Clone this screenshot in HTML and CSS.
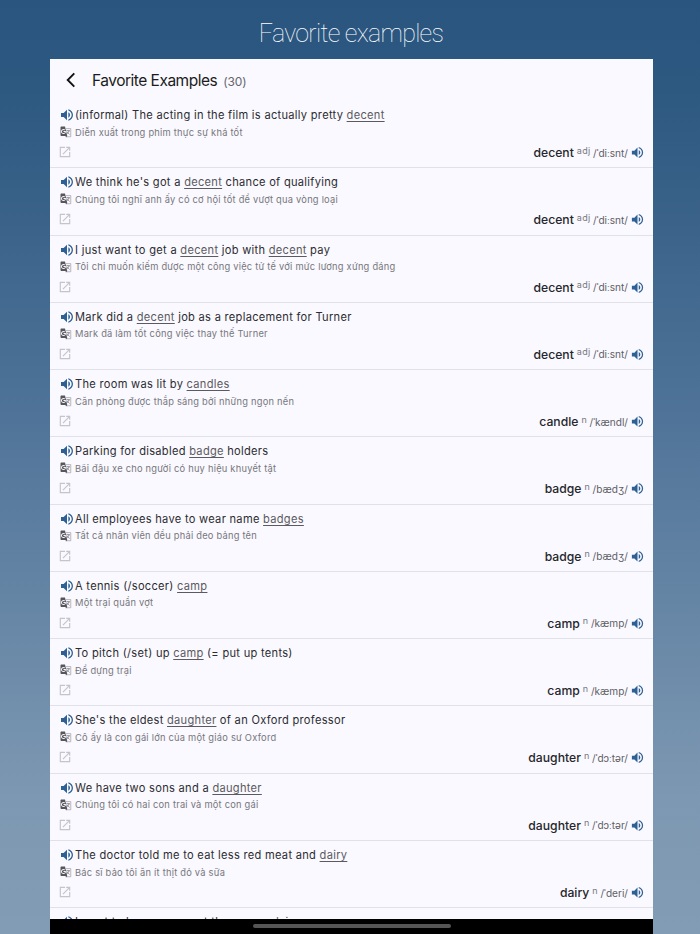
FILE: index.html
```html
<!DOCTYPE html>
<html lang="en">
<head>
    <meta charset="UTF-8">
    <meta name="viewport" content="width=device-width, initial-scale=1.0">
    <title>Favorite examples</title>
    <link rel="stylesheet" href="styles.css">
</head>
<body>
    <svg class="defs" width="0" height="0">
        <symbol id="sound" viewBox="0 0 24 24">
            <path d="M3 9v6h4l5 5V4L7 9H3zm13.5 3c0-1.77-1.02-3.29-2.5-4.03v8.05c1.48-.73 2.5-2.25 2.5-4.02zM14 3.23v2.06c2.89.86 5 3.54 5 6.71s-2.11 5.85-5 6.71v2.06c4.01-.91 7-4.49 7-8.77s-2.99-7.86-7-8.77z"/>
        </symbol>
        <symbol id="translate" viewBox="0 0 24 24">
            <path class="sheet" d="M12 5.2h9.5v16.3h-8.5"/>
            <path class="mark" d="M12.5 9.5h7.5M16 8v1.5M18.3 9.5c-.7 2.6-2.3 4.5-4.3 6M14.5 12l4.500 5"/>
            <path fill-rule="evenodd" d="M10 1H3c-1.1 0-2 .9-2 2v15c0 1.1.9 2 2 2h8l1 3 2.5-3.2L10 1zM7 16c-2.76 0-5-2.24-5-5s2.24-5 5-5c1.35 0 2.48.5 3.35 1.3L9.03 8.57c-.38-.36-1.04-.78-2.03-.78-1.74 0-3.15 1.44-3.15 3.21S5.26 14.21 7 14.21c2.01 0 2.84-1.44 2.92-2.41H7v-1.71h4.68c.07.31.12.61.12 1.02C11.8 13.97 9.89 16 7 16z"/>
        </symbol>
        <symbol id="open" viewBox="0 0 24 24">
            <path d="M19 19H5V5h7V3H3v18h18v-9h-2v7zM14 3v2h3.59l-9.83 9.83 1.41 1.41L19 6.41V10h2V3h-7z"/>
        </symbol>
    </svg>

    <h1 class="caption">Favorite examples</h1>
    <div class="screen">
        <div class="header">
            <svg class="back" viewBox="0 0 10 16"><path d="M8.3 1.3L1.7 8l6.6 6.7"/></svg>
            <span class="title">Favorite Examples</span>
            <span class="count">(30)</span>
        </div>
        <ul class="list">
            <li>
                <p class="en"><svg><use href="#sound"/></svg><span>(informal) The acting in the film is actually pretty <u>decent</u></span></p>
                <p class="vi"><svg><use href="#translate"/></svg><span>Diễn xuất trong phim thực sự khá tốt</span></p>
                <div class="foot"><svg class="open"><use href="#open"/></svg><b>decent</b><sup>adj</sup><span class="ipa">/ˈdiːsnt/</span><svg class="sound"><use href="#sound"/></svg></div>
            </li>
            <li>
                <p class="en"><svg><use href="#sound"/></svg><span>We think he's got a <u>decent</u> chance of qualifying</span></p>
                <p class="vi"><svg><use href="#translate"/></svg><span>Chúng tôi nghĩ anh ấy có cơ hội tốt để vượt qua vòng loại</span></p>
                <div class="foot"><svg class="open"><use href="#open"/></svg><b>decent</b><sup>adj</sup><span class="ipa">/ˈdiːsnt/</span><svg class="sound"><use href="#sound"/></svg></div>
            </li>
            <li>
                <p class="en"><svg><use href="#sound"/></svg><span>I just want to get a <u>decent</u> job with <u>decent</u> pay</span></p>
                <p class="vi"><svg><use href="#translate"/></svg><span>Tôi chỉ muốn kiếm được một công việc tử tế với mức lương xứng đáng</span></p>
                <div class="foot"><svg class="open"><use href="#open"/></svg><b>decent</b><sup>adj</sup><span class="ipa">/ˈdiːsnt/</span><svg class="sound"><use href="#sound"/></svg></div>
            </li>
            <li>
                <p class="en"><svg><use href="#sound"/></svg><span>Mark did a <u>decent</u> job as a replacement for Turner</span></p>
                <p class="vi"><svg><use href="#translate"/></svg><span>Mark đã làm tốt công việc thay thế Turner</span></p>
                <div class="foot"><svg class="open"><use href="#open"/></svg><b>decent</b><sup>adj</sup><span class="ipa">/ˈdiːsnt/</span><svg class="sound"><use href="#sound"/></svg></div>
            </li>
            <li>
                <p class="en"><svg><use href="#sound"/></svg><span>The room was lit by <u>candles</u></span></p>
                <p class="vi"><svg><use href="#translate"/></svg><span>Căn phòng được thắp sáng bởi những ngọn nến</span></p>
                <div class="foot"><svg class="open"><use href="#open"/></svg><b>candle</b><sup>n</sup><span class="ipa">/ˈkændl/</span><svg class="sound"><use href="#sound"/></svg></div>
            </li>
            <li>
                <p class="en"><svg><use href="#sound"/></svg><span>Parking for disabled <u>badge</u> holders</span></p>
                <p class="vi"><svg><use href="#translate"/></svg><span>Bãi đậu xe cho người có huy hiệu khuyết tật</span></p>
                <div class="foot"><svg class="open"><use href="#open"/></svg><b>badge</b><sup>n</sup><span class="ipa">/bædʒ/</span><svg class="sound"><use href="#sound"/></svg></div>
            </li>
            <li>
                <p class="en"><svg><use href="#sound"/></svg><span>All employees have to wear name <u>badges</u></span></p>
                <p class="vi"><svg><use href="#translate"/></svg><span>Tất cả nhân viên đều phải đeo bảng tên</span></p>
                <div class="foot"><svg class="open"><use href="#open"/></svg><b>badge</b><sup>n</sup><span class="ipa">/bædʒ/</span><svg class="sound"><use href="#sound"/></svg></div>
            </li>
            <li>
                <p class="en"><svg><use href="#sound"/></svg><span>A tennis (/soccer) <u>camp</u></span></p>
                <p class="vi"><svg><use href="#translate"/></svg><span>Một trại quần vợt</span></p>
                <div class="foot"><svg class="open"><use href="#open"/></svg><b>camp</b><sup>n</sup><span class="ipa">/kæmp/</span><svg class="sound"><use href="#sound"/></svg></div>
            </li>
            <li>
                <p class="en"><svg><use href="#sound"/></svg><span>To pitch (/set) up <u>camp</u> (= put up tents)</span></p>
                <p class="vi"><svg><use href="#translate"/></svg><span>Để dựng trại</span></p>
                <div class="foot"><svg class="open"><use href="#open"/></svg><b>camp</b><sup>n</sup><span class="ipa">/kæmp/</span><svg class="sound"><use href="#sound"/></svg></div>
            </li>
            <li>
                <p class="en"><svg><use href="#sound"/></svg><span>She's the eldest <u>daughter</u> of an Oxford professor</span></p>
                <p class="vi"><svg><use href="#translate"/></svg><span>Cô ấy là con gái lớn của một giáo sư Oxford</span></p>
                <div class="foot"><svg class="open"><use href="#open"/></svg><b>daughter</b><sup>n</sup><span class="ipa">/ˈdɔːtər/</span><svg class="sound"><use href="#sound"/></svg></div>
            </li>
            <li>
                <p class="en"><svg><use href="#sound"/></svg><span>We have two sons and a <u>daughter</u></span></p>
                <p class="vi"><svg><use href="#translate"/></svg><span>Chúng tôi có hai con trai và một con gái</span></p>
                <div class="foot"><svg class="open"><use href="#open"/></svg><b>daughter</b><sup>n</sup><span class="ipa">/ˈdɔːtər/</span><svg class="sound"><use href="#sound"/></svg></div>
            </li>
            <li>
                <p class="en"><svg><use href="#sound"/></svg><span>The doctor told me to eat less red meat and <u>dairy</u></span></p>
                <p class="vi"><svg><use href="#translate"/></svg><span>Bác sĩ bảo tôi ăn ít thịt đỏ và sữa</span></p>
                <div class="foot"><svg class="open"><use href="#open"/></svg><b>dairy</b><sup>n</sup><span class="ipa">/ˈderi/</span><svg class="sound"><use href="#sound"/></svg></div>
            </li>
            <li>
                <p class="en"><svg><use href="#sound"/></svg><span>I want to buy a cream at the corner <u>dairy</u></span></p>
            </li>
        </ul>
        <div class="home"><span></span></div>
    </div>
</body>
</html>
```
FILE: styles.css
```css
*{
    margin: 0;
    padding: 0;
    box-sizing: border-box;
}
body{
    height: 934px;
    overflow: hidden;
    font-family: Inter, "Liberation Sans", sans-serif;
    background: linear-gradient(#2a557f 0, #2d5880 90px, #507499 420px, #7d98b2 800px, #839cb5 934px);
}
.defs{
    position: absolute;
}
.caption{
    height: 59px;
    padding-top: 18px;
    padding-left: 2px;
    text-align: center;
    font: 100 25px/32px Roboto, sans-serif;
    letter-spacing: -0.7px;
    color: #fff;
}
.screen{
    display: flex;
    flex-direction: column;
    width: 603px;
    height: 875px;
    margin-left: 50px;
    background: #faf9ff;
}
.header{
    display: flex;
    align-items: center;
    height: 42px;
    flex: none;
    padding-left: 16px;
}
.back{
    width: 10px;
    height: 16px;
    fill: none;
    stroke: #111;
    stroke-width: 1.9;
}
.title{
    margin-left: 16px;
    font-size: 15.5px;
    letter-spacing: -0.5px;
    color: #1c1c20;
}
.count{
    margin-top: 2px;
    margin-left: 6px;
    font-size: 12px;
    letter-spacing: -0.1px;
    color: #66666c;
}
.list{
    flex: 1;
    min-height: 0;
    overflow: hidden;
    list-style: none;
}
.list li{
    height: 67.27px;
    padding: 5.6px 9px 0;
    border-bottom: 1px solid #e1e1e8;
}
.en,
.vi{
    display: flex;
    align-items: center;
    white-space: nowrap;
}
.en{
    height: 17px;
    font-size: 11.1px;
    letter-spacing: 0.29px;
    color: #2c2c31;
}
.en svg{
    width: 16px;
    height: 16px;
    fill: #2f6094;
}
.en u{
    color: #5a5a60;
    text-decoration-skip-ink: none;
    text-underline-offset: 2px;
}
.vi{
    height: 17px;
    font-size: 9.3px;
    letter-spacing: 0.23px;
    color: #77777c;
}
.vi svg{
    width: 12px;
    height: 12px;
    margin: 0 3px 0 1px;
    fill: #57575b;
}
.sheet,
.mark{
    fill: none;
    stroke: #a2a2a8;
    stroke-width: 1.5;
}
.mark{
    stroke: #77777c;
}
.foot{
    display: flex;
    align-items: center;
    height: 23px;
}
.foot .open{
    width: 14px;
    height: 14px;
    margin-left: -1px;
    margin-right: auto;
    fill: #c4c4ca;
}
.foot b{
    margin-top: 1px;
    font-size: 12.2px;
    font-weight: 500;
    color: #26262b;
}
.foot sup{
    margin: -3px 2.5px 0 3px;
    font-size: 9px;
    line-height: 12px;
    letter-spacing: 0.3px;
    color: #77777c;
}
.foot .ipa{
    margin-top: 1px;
    font-size: 10.1px;
    color: #5e5e64;
}
.foot .sound{
    width: 15px;
    height: 15px;
    margin-top: 1px;
    margin-left: 2px;
    margin-right: -1px;
    fill: #2f6094;
}
.home{
    display: flex;
    justify-content: center;
    flex: none;
    height: 15px;
    padding-top: 5px;
    background: #000;
}
.home span{
    width: 198px;
    height: 4px;
    border-radius: 2px;
    background: #555;
}
```
